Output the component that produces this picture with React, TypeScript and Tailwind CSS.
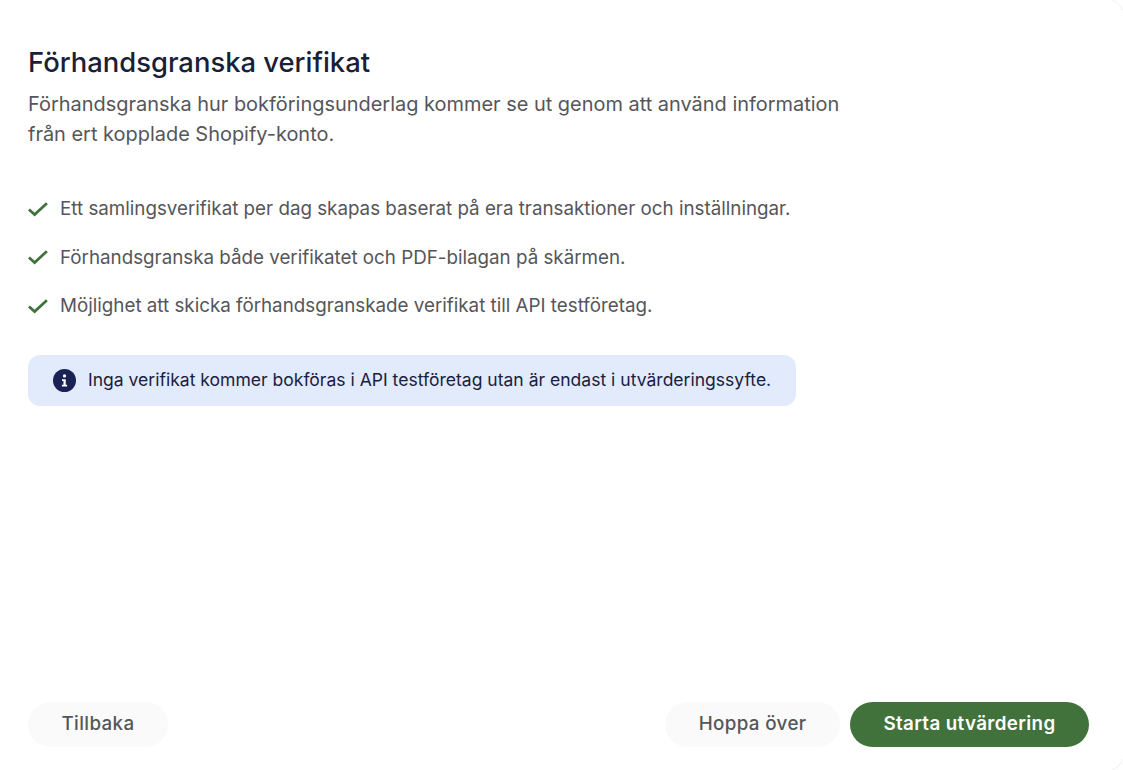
const points = [
  'Ett samlingsverifikat per dag skapas baserat på era transaktioner och inställningar.',
  'Förhandsgranska både verifikatet och PDF-bilagan på skärmen.',
  'Möjlighet att skicka förhandsgranskade verifikat till API testföretag.',
]

function CheckIcon() {
  return (
    <svg viewBox="0 0 20 15" className="h-[15px] w-[20px] shrink-0" fill="none">
      <path d="M1 7.5 L6.6 12.6 L18.9 1.2" stroke="#41723b" strokeWidth="2.7" />
    </svg>
  )
}

function InfoIcon() {
  return (
    <svg viewBox="0 0 24 24" className="h-[23px] w-[23px] shrink-0">
      <circle cx="12" cy="12" r="12" fill="#1a2255" />
      <circle cx="12" cy="7.2" r="1.7" fill="#fff" />
      <path d="M9.4 10.6h3.9v5.9h1.4v1.8H9.3v-1.8h1.6v-4.1H9.4z" fill="#fff" />
    </svg>
  )
}

const softButton = 'h-[45px] rounded-full bg-[#fafafa] px-[33.5px] text-[18.8px] font-medium tracking-[0.36px] text-[#55565a]'

export default function App() {
  return (
    <div className="h-[770px] w-[1123px] overflow-hidden bg-white font-['Inter',sans-serif]">
      <div className="-m-[3px] flex h-[776px] w-[1129px] flex-col justify-between rounded-r-[24px] border border-[#f0f0f0] bg-white pb-[25px] pl-[30px] pr-[36px] pt-[46px]">
        <div>
          <h1 className="text-[27.4px] font-medium leading-[36px] text-[#1a1f36]">Förhandsgranska verifikat</h1>
          <p className="mt-[9px] w-[830px] text-[19.95px] leading-[30px] text-[#55565a]">
            Förhandsgranska hur bokföringsunderlag kommer se ut genom att använd information från ert kopplade Shopify-konto.
          </p>
          <ul className="mt-[45px] flex flex-col gap-[18.5px]">
            {points.map((p) => (
              <li key={p} className="flex items-center gap-[12px] text-[18.77px] leading-[30px] text-[#55565a]">
                <CheckIcon />
                {p}
              </li>
            ))}
          </ul>
          <div className="mt-[34px] flex h-[51px] w-[768px] items-center gap-[12px] rounded-[12px] bg-[#e2ebfb] pl-[25px] text-[17.54px] text-[#1a2040]">
            <InfoIcon />
            Inga verifikat kommer bokföras i API testföretag utan är endast i utvärderingssyfte.
          </div>
        </div>
        <div className="flex items-center justify-between">
          <button type="button" className={softButton}>
            Tillbaka
          </button>
          <div className="flex gap-[10px]">
            <button type="button" className={softButton}>
              Hoppa över
            </button>
            <button type="button" className="h-[45px] rounded-full bg-[#41723b] px-[33.5px] text-[18.8px] font-semibold tracking-[0.36px] text-white">
              Starta utvärdering
            </button>
          </div>
        </div>
      </div>
    </div>
  )
}
